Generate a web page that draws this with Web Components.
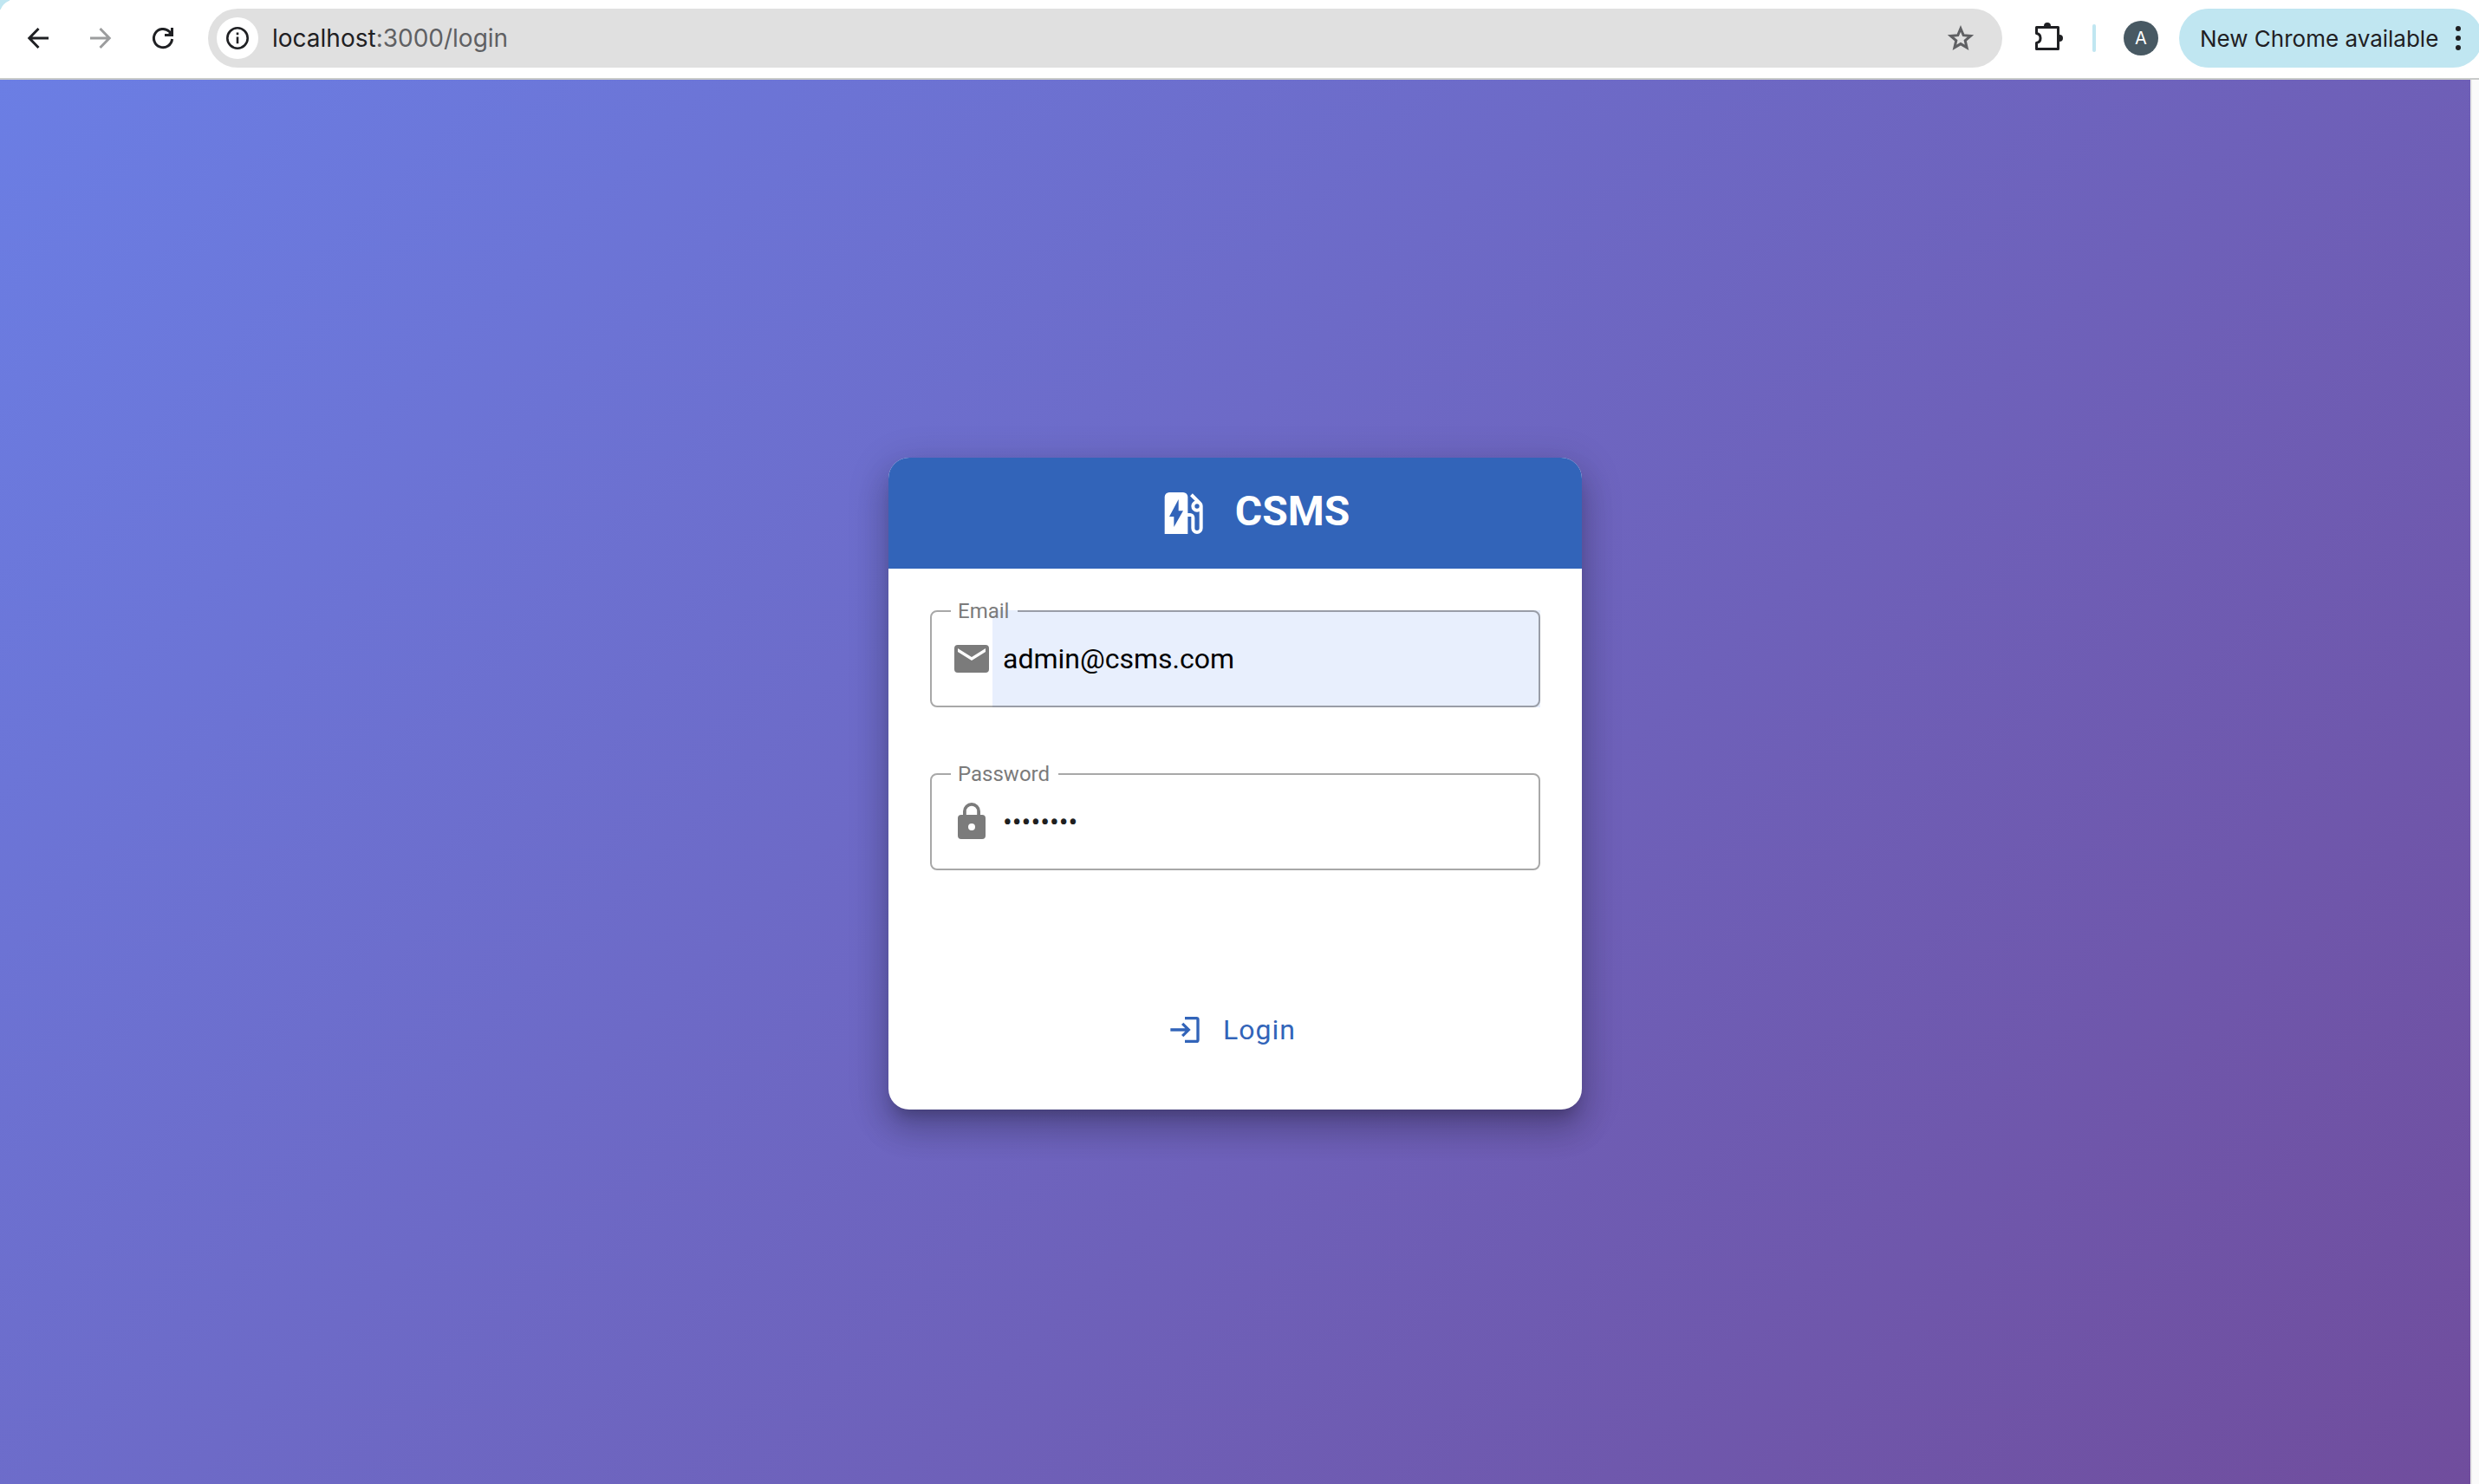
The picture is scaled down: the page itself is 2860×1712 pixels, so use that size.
<!DOCTYPE html>
<html lang="en">
<head>
<meta charset="utf-8">
<title>CSMS Login</title>
<style>
html, body { margin: 0; height: 100%; }
body { display: flex; flex-direction: column; font-family: Roboto, "Liberation Sans", sans-serif; background: #fff; overflow: hidden; }
</style>
</head>
<body>
<browser-toolbar></browser-toolbar>
<login-page>
  <login-card>
    <app-brand slot="header">CSMS</app-brand>
    <text-field label="Email" type="email" value="admin@csms.com" icon="mail" autofilled></text-field>
    <text-field label="Password" type="password" value="password" icon="lock"></text-field>
    <login-button slot="actions">Login</login-button>
  </login-card>
</login-page>
<script>
class Base extends HTMLElement {
  constructor() {
    super();
    this.attachShadow({ mode: 'open' }).innerHTML = this.view();
  }
}

customElements.define('browser-toolbar', class extends Base {
  view() {
    return `<style>
:host { display: block; background: linear-gradient(135deg, #c0e6f1 8px, transparent 8px); font-family: Inter, "Liberation Sans", sans-serif; }
nav { display: flex; align-items: center; height: 92px; box-sizing: border-box; padding-bottom: 2px; border-bottom: 2px solid #c9cbca; background: #fff; border-top-left-radius: 16px; overflow: hidden; }
button { flex: none; display: grid; place-items: center; padding: 0; border: 0; background: none; color: #1f2023; font: inherit; }
.nav { width: 72px; height: 72px; }
svg { display: block; }
.nav[disabled] { color: #9c9d9e; }
.start { display: flex; padding-left: 8px; }
.omni { flex: 1; display: flex; align-items: center; height: 68px; box-sizing: border-box; border-radius: 34px; background: #e0e0e0; margin-left: 16px; padding: 0 10px; }
.info { width: 48px; height: 48px; border-radius: 50%; background: #fff; }
.url { flex: 1; min-width: 0; margin-left: 16px; font-size: 28px; line-height: 40px; color: #5f6063; white-space: nowrap; }
.url b { font-weight: 400; color: #1f2023; }
.star { width: 76px; height: 56px; color: #5f6063; }
.ext { width: 104px; height: 56px; }
.sep { width: 4px; height: 32px; border-radius: 2px; background: #c0e6f1; }
.avatar { width: 40px; height: 40px; border-radius: 50%; background: #485963; color: #fff; font-size: 20px; margin: 0 24px 0 32px; }
.update { display: flex; align-items: center; height: 68px; width: 350px; margin-right: -4px; padding-left: 24px; border-radius: 34px; background: #c0e6f1; font-size: 26px; gap: 20px; box-sizing: border-box; white-space: nowrap; }
</style>
<nav aria-label="Browser">
  <div class="start">
    <button class="nav" aria-label="Back"><svg width="28" height="28" viewBox="0 0 28 28" fill="none" stroke="currentColor" stroke-width="3"><path d="M26 14H4M14.500 3 3.800 14l10.700 11"/></svg></button>
    <button class="nav" aria-label="Forward" disabled><svg width="28" height="28" viewBox="0 0 28 28" fill="none" stroke="currentColor" stroke-width="3"><path d="M2 14h22M13.500 3l10.700 11-10.700 11"/></svg></button>
    <button class="nav" aria-label="Reload"><svg width="28" height="28" viewBox="0 0 28 28" fill="none" stroke="currentColor" stroke-width="3"><path d="M24.600 15A10.600 10.600 0 1 1 21.500 6.500L24 9"/><path d="M26 2v10H16v-3h4l3-3V2z" fill="currentColor" stroke="none"/></svg></button>
  </div>
  <div class="omni">
    <button class="info" aria-label="Site information"><svg width="28" height="28" viewBox="0 0 28 28" fill="none" stroke="#1f2023" stroke-width="2.600"><circle cx="14" cy="14" r="11.700"/><path d="M14 12.500v7.800M14 7.500v2.800"/></svg></button>
    <div class="url"><b>localhost</b>:3000/login</div>
    <button class="star" aria-label="Bookmark"><svg width="32" height="32" viewBox="0 0 32 32" fill="none" stroke="currentColor" stroke-width="3"><path d="M16 5l3.200 7.700 8.300.7-6.300 5.400 1.900 8.100L16 22.600l-7.100 4.300 1.900-8.100-6.300-5.400 8.300-.7z"/></svg></button>
  </div>
  <button class="ext" aria-label="Extensions"><svg width="36" height="36" viewBox="0 0 36 36"><path d="M5.500 5.500h25v25h-25V23.500a5.600 5.600 0 0 0 0-11z" fill="none" stroke="currentColor" stroke-width="3" stroke-linejoin="round"/><path d="M14 5V4a4 4 0 0 1 8 0v1zM31 14h1a4 4 0 0 1 0 8h-1z" fill="currentColor"/></svg></button>
  <span class="sep"></span>
  <button class="avatar" aria-label="Profile">A</button>
  <button class="update"><span>New Chrome available</span><svg width="6" height="28" viewBox="0 0 6 28" fill="currentColor"><circle cx="3" cy="3" r="3"/><circle cx="3" cy="14" r="3"/><circle cx="3" cy="25" r="3"/></svg></button>
</nav>`;
  }
});

customElements.define('login-page', class extends Base {
  view() {
    return `<style>
:host { flex: 1; min-height: 0; display: flex; background: #fafafa; }
main { flex: 1; display: flex; align-items: center; justify-content: center; background: linear-gradient(135deg, #6b7ee4 0%, #704d9d 100%); padding-top: 4px; }
.track { width: 8px; border-left: 2px solid #e8e8e8; background: #fafafa; }
</style><main><slot></slot></main><div class="track"></div>`;
  }
});

customElements.define('login-card', class extends Base {
  view() {
    return `<style>
:host { display: block; width: 800px; max-width: 100%; border-radius: 24px; overflow: hidden; background: #fff;
  box-shadow: 0 14px 16px -8px rgba(0,0,0,.2), 0 24px 34px 4px rgba(0,0,0,.14), 0 10px 44px 8px rgba(0,0,0,.12); }
header { display: flex; justify-content: center; height: 128px; box-sizing: border-box; padding: 30px 0 0 40px; background: #3264b9; color: #fff; }
form { display: flex; flex-direction: column; gap: 76px; padding: 48px 48px 148px; }
footer { display: flex; justify-content: center; padding: 0 48px 56px; }
</style>
<header><slot name="header"></slot></header>
<form><slot></slot></form>
<footer><slot name="actions"></slot></footer>`;
  }
});

customElements.define('app-brand', class extends Base {
  view() {
    return `<style>
:host { display: flex; align-items: flex-start; gap: 28px; }
h1 { margin: 0; font-size: 48px; line-height: 64px; font-weight: 700; }
svg { display: block; margin-top: 2px; }
</style>
<svg width="64" height="64" viewBox="0 0 24 24" fill="#fff"><path d="M19.770 7.230l.01-.01-3.720-3.720L15 4.560l2.110 2.110c-.94.36-1.610 1.260-1.610 2.330A2.500 2.500 0 0 0 18 11.500c.36 0 .69-.08 1-.21v7.210a1 1 0 0 1-2 0V14a2 2 0 0 0-2-2h-1V5a2 2 0 0 0-2-2H6a2 2 0 0 0-2 2v16h10v-7.500h1.500v5a2.500 2.500 0 0 0 5 0V9c0-.69-.28-1.320-.73-1.770zM18 10a1 1 0 1 1 0-2 1 1 0 0 1 0 2zM8 18v-4.500H6L10 6v5h2z"/></svg>
<h1><slot></slot></h1>`;
  }
});

const ICONS = {
  mail: 'M20 4H4a2 2 0 0 0-2 2v12a2 2 0 0 0 2 2h16a2 2 0 0 0 2-2V6a2 2 0 0 0-2-2zm0 4l-8 5-8-5V6l8 5 8-5z',
  lock: 'M18 8h-1V6A5 5 0 0 0 7 6v2H6a2 2 0 0 0-2 2v10a2 2 0 0 0 2 2h12a2 2 0 0 0 2-2V10a2 2 0 0 0-2-2zm-6 9a2 2 0 1 1 0-4 2 2 0 0 1 0 4zM15.100 8H8.900V6a3.100 3.100 0 0 1 6.200 0z'
};

customElements.define('text-field', class extends Base {
  view() {
    const a = n => this.getAttribute(n);
    return `<style>
:host { display: block; position: relative; }
:host([autofilled]) input { background: #e8effd; }
fieldset { position: absolute; inset: -13px 0 0; margin: 0; min-width: 0; padding: 0 22px; border: 2px solid rgba(0,0,0,.34); border-radius: 8px; pointer-events: none; }
legend { padding: 0 10px 0 8px; font-size: 24px; line-height: 28px; color: #7b7b7b; }
.box { display: flex; align-items: center; height: 112px; padding-left: 24px; }
svg { flex: none; }
input { flex: 1; min-width: 0; height: 100%; box-sizing: border-box; border: 0; outline: 0; border-radius: 0; background: none; padding: 0 24px 0 12px; font: 400 32px/48px Roboto, "Liberation Sans", sans-serif; color: #000; }
input[type=password] { color: #1f1f1f; }
</style>
<div class="box">
  <svg width="48" height="48" viewBox="0 0 24 24" fill="#7b7b7b"><path d="${ICONS[a('icon')]}"/></svg>
  <input id="f" type="${a('type')}" value="${a('value')}">
</div>
<fieldset><legend><label for="f">${a('label')}</label></legend></fieldset>`;
  }
});

customElements.define('login-button', class extends Base {
  view() {
    return `<style>
:host { display: block; }
button { display: flex; align-items: center; gap: 24px; height: 72px; padding: 0 36px 0 28px; border: 0; background: none; color: #3264b9; font: 400 32px/48px Roboto, "Liberation Sans", sans-serif; letter-spacing: 1px; }
</style>
<button type="submit"><svg width="40" height="40" viewBox="0 0 24 24" fill="currentColor"><path d="M11 7 9.600 8.400l2.600 2.600H2v2h10.200l-2.600 2.600L11 17l5-5zm9 12h-8v2h8a2 2 0 0 0 2-2V5a2 2 0 0 0-2-2h-8v2h8z"/></svg><slot></slot></button>`;
  }
});
</script>
</body>
</html>
